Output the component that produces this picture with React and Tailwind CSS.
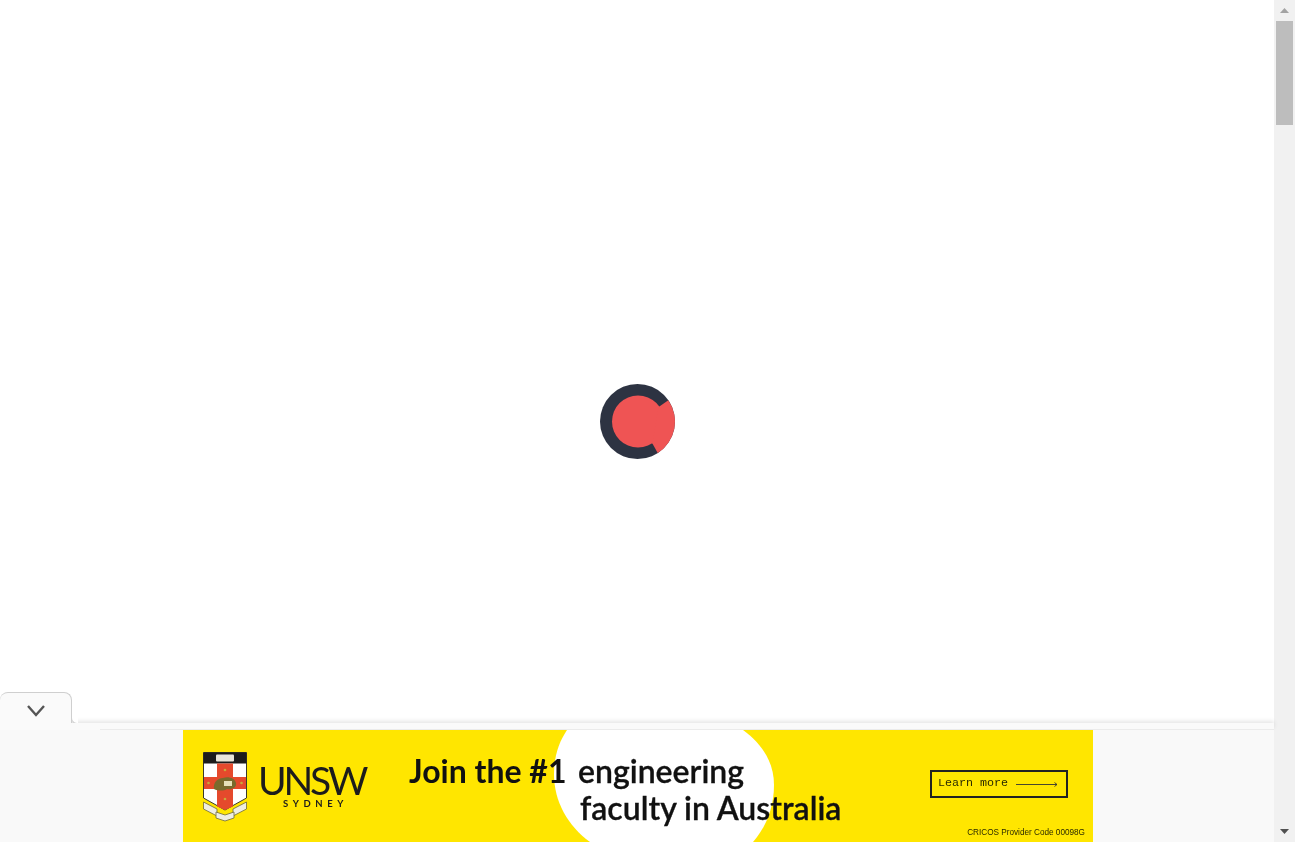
import React from 'react';

const Spinner = () => (
  <svg width="75" height="75" viewBox="0 0 75 75">
    <circle cx="37.5" cy="37.5" r="37.5" fill="#2d3342" />
    <circle cx="38" cy="37.5" r="26" fill="#ef5454" />
    <path d="M58.3 23.3 L68.3 16.2 A37.5 37.5 0 0 1 57.7 69.1 L52.3 59.3 Z" fill="#ef5454" />
  </svg>
);

const Crest = () => (
  <svg width="44" height="70" viewBox="0 0 44 70" className="shrink-0">
    <path d="M0.5 0.5 H43.5 V46 L22 58 L0.5 46 Z" fill="#fff" stroke="#3a3a2a" strokeWidth="1" />
    <rect x="0.5" y="0.5" width="43" height="11" fill="#1c1c1c" />
    <rect x="13" y="2.5" width="18" height="7" rx="1" fill="#e9e6da" />
    <path d="M14 11.5 H30 V25 H43 V37 H30 V54.5 L22 58 L14 54.5 V37 H1 V25 H14 Z" fill="#e5492c" />
    <circle cx="22" cy="18" r="1.3" fill="#c9a93a" />
    <circle cx="5.5" cy="31" r="1.3" fill="#c9a93a" />
    <circle cx="38.5" cy="31" r="1.3" fill="#c9a93a" />
    <circle cx="22" cy="47" r="1.3" fill="#c9a93a" />
    <path d="M11 37 C10 31 14 26 20 26 C25 24 32 26 33 31 C34 36 28 38 24 37 C21 39 15 39 11 37 Z" fill="#7a6a2c" />
    <path d="M21 29 H29 V34 H21 Z" fill="#e8e0b8" />
    <path d="M0.5 50 L14 57 L14 64 L0.5 57 Z" fill="#efeee2" stroke="#6f6a3a" strokeWidth="0.8" />
    <path d="M43.5 50 L30 57 L30 64 L43.5 57 Z" fill="#efeee2" stroke="#6f6a3a" strokeWidth="0.8" />
    <path d="M13 60 L22 63 L31 60 L31 66 L22 69 L13 66 Z" fill="#efeee2" stroke="#6f6a3a" strokeWidth="0.8" />
  </svg>
);

const AdBanner = () => (
  <div className="relative w-[910px] h-[112px] ml-[183px] bg-[#ffe600] overflow-hidden flex text-[#111] blur-[0.4px]">
    <svg className="absolute inset-0" width="910" height="112" viewBox="0 0 910 112">
      <path d="M384 0 C376 12 371 26 371 44 C371 72 385 96 407 112 H570 C584 96 591 76 591 55 C591 32 579 14 560 0 Z" fill="#fff" />
    </svg>
    <div className="relative flex items-start gap-[11px] pl-5 pt-[22px] w-[226px]">
      <Crest />
      <div className="flex flex-col items-center pt-[10px] text-[#1c1c1c]">
        <span className="font-['Lato',sans-serif] font-normal text-[39px] leading-[36px] tracking-[-3.2px]">UNSW</span>
        <span className="ml-[8px] font-['Lato',sans-serif] font-bold text-[9.5px] leading-[11px] tracking-[4.6px]">SYDNEY</span>
      </div>
    </div>
    <div className="relative flex flex-col pt-[22px] font-['Lato',sans-serif] text-[32px] font-bold leading-[37px] whitespace-nowrap">
      <div className="flex">
        <span className="w-[169px]">Join the #1</span>
        <span className="font-semibold [-webkit-text-stroke:0.3px_#111]">engineering</span>
      </div>
      <div className="pl-[171px] font-semibold [-webkit-text-stroke:0.3px_#111]">faculty in Australia</div>
    </div>
    <div className="relative ml-auto flex flex-col items-end pr-[25px] pt-10">
      <div className="w-[138px] h-[28px] border-2 border-[#222] flex items-center pl-[6px] gap-2 whitespace-nowrap">
        <span className="font-['Liberation_Mono',monospace] text-[11.7px] leading-none text-[#2a2a00]">Learn more</span>
        <svg width="42" height="7" viewBox="0 0 42 7" fill="none" stroke="#333" strokeWidth="0.9">
          <path d="M0 3.5 H41 M38.5 1.5 L41 3.5 L38.5 5.5" />
        </svg>
      </div>
      <span className="mt-[29px] mr-[-17px] font-['Liberation_Sans',sans-serif] text-[8.2px] leading-[12px] whitespace-nowrap text-[#2a2a00]">CRICOS Provider Code 00098G</span>
    </div>
  </div>
);

const Scrollbar = () => (
  <div className="w-[21px] h-full bg-[#f1f1f1] flex flex-col items-center shrink-0">
    <div className="h-[21px] flex items-center justify-center">
      <svg width="9" height="5" viewBox="0 0 9 5"><path d="M4.5 0 L9 5 H0 Z" fill="#a3a3a3" /></svg>
    </div>
    <div className="w-[17px] h-[104px] bg-[#bdbdbd]" />
    <div className="mt-auto h-[21px] flex items-center justify-center">
      <svg width="9" height="5" viewBox="0 0 9 5"><path d="M0 0 H9 L4.5 5 Z" fill="#505050" /></svg>
    </div>
  </div>
);

export default function App() {
  return (
    <div className="flex h-screen overflow-hidden bg-white">
      <div className="relative flex-1 flex flex-col justify-end">
        <div className="h-[7px] bg-[#fafafa] shadow-[0_-2px_4px_rgba(0,0,0,0.1)] relative">
          <div className="absolute left-[71px] bottom-[6px] w-[7px] h-[7px] border-l border-b border-[#d4d4d4] rounded-bl-md bg-white" />
          <button className="absolute left-0 bottom-[7px] z-10 w-[72px] h-[31px] pt-[6px] flex items-center justify-center bg-[#fafafa] border-t border-r border-[#cfcfcf] rounded-t-lg">
            <svg width="20" height="14" viewBox="0 0 20 14" fill="none" stroke="#555" strokeWidth="2.4">
              <path d="M2 2 L10 11 L18 2" />
            </svg>
          </button>
          <div className="absolute left-0 bottom-0 z-10 w-[78px] h-[7px] bg-[#fafafa]" />
        </div>
        <div className="h-[112px] bg-[#f9f9f9] relative">
          <div className="ml-[100px] h-px bg-[#ebebeb] absolute top-[-1px] left-0 right-0" />
          <AdBanner />
        </div>
        <div className="absolute inset-0 flex items-center justify-center pointer-events-none">
          <Spinner />
        </div>
      </div>
      <Scrollbar />
    </div>
  );
}
